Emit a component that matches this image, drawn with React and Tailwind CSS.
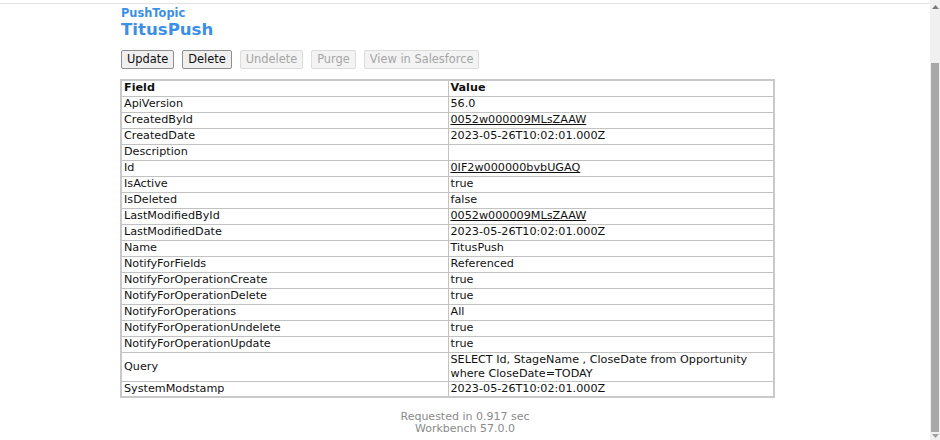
const rows = [
  ['ApiVersion', '56.0'],
  ['CreatedById', '0052w000009MLsZAAW', true],
  ['CreatedDate', '2023-05-26T10:02:01.000Z'],
  ['Description', ''],
  ['Id', '0IF2w000000bvbUGAQ', true],
  ['IsActive', 'true'],
  ['IsDeleted', 'false'],
  ['LastModifiedById', '0052w000009MLsZAAW', true],
  ['LastModifiedDate', '2023-05-26T10:02:01.000Z'],
  ['Name', 'TitusPush'],
  ['NotifyForFields', 'Referenced'],
  ['NotifyForOperationCreate', 'true'],
  ['NotifyForOperationDelete', 'true'],
  ['NotifyForOperations', 'All'],
  ['NotifyForOperationUndelete', 'true'],
  ['NotifyForOperationUpdate', 'true'],
  ['Query', 'SELECT Id, StageName , CloseDate from Opportunity where CloseDate=TODAY'],
  ['SystemModstamp', '2023-05-26T10:02:01.000Z'],
];

const Btn = ({ children, disabled }) => (
  <button
    className={
      disabled
        ? 'h-[19px] px-[5px] bg-[#f3f3f3] border border-[#dcdcdc] rounded-[2px] text-[#a6a6a6] text-[11.4px] leading-none'
        : 'h-[19px] px-[5px] bg-[#efefef] border border-[#8f8f8f] rounded-[2px] text-[#111] text-[11.4px] leading-none'
    }
  >
    {children}
  </button>
);

export default function App() {
  return (
    <div className="w-[940px] h-[440px] overflow-hidden flex bg-white font-['DejaVu_Sans',Verdana,sans-serif] text-[11.2px] text-[#111]">
      <div className="flex-1 flex flex-col pt-[3px]">
        <div className="border-t border-[#e3e3e3] flex-1 flex flex-col pl-[121px]">
          {/* header */}
          <div className="pt-[3px] text-[#3d8fe6] font-bold">
            <div className="text-[11.4px] leading-[13px]">PushTopic</div>
            <div className="text-[16.6px] leading-[20px]">TitusPush</div>
          </div>

          {/* actions */}
          <div className="flex gap-[8px] mt-[10px]">
            <Btn>Update</Btn>
            <Btn>Delete</Btn>
            <Btn disabled>Undelete</Btn>
            <Btn disabled>Purge</Btn>
            <Btn disabled>View in Salesforce</Btn>
          </div>

          {/* detail table */}
          <table className="mt-[10px] ml-[-1px] w-[655px] border-collapse border-2 border-[#c9c9c9]">
            <tbody>
              <tr className="h-[16px] leading-[14px]">
                <th className="w-[327px] border border-[#c2c2c2] px-[2px] text-left font-bold">Field</th>
                <th className="border border-[#c2c2c2] px-[2px] text-left font-bold">Value</th>
              </tr>
              {rows.map(([k, v, link]) => (
                <tr key={k} className="h-[16px] leading-[14px]">
                  <td className="border border-[#c2c2c2] px-[2px] align-middle">{k}</td>
                  <td className="border border-[#c2c2c2] px-[2px] align-middle">
                    {link ? <a className="underline text-[#111]">{v}</a> : v}
                  </td>
                </tr>
              ))}
            </tbody>
          </table>

          {/* footer */}
          <div className="ml-[-121px] mt-[13px] text-center text-[#8a8a8a] text-[11px] leading-[12px]">
            <div>Requested in 0.917 sec</div>
            <div>Workbench 57.0.0</div>
          </div>
        </div>
      </div>

      {/* scrollbar */}
      <div className="w-[10px] bg-[#f0f0f0] flex flex-col items-center">
        <div className="h-[14px] flex items-center justify-center">
          <svg width="7" height="4" viewBox="0 0 7 4"><path d="M3.5 0L7 4H0z" fill="#7a7a7a" /></svg>
        </div>
        <div className="h-[49px]" />
        <div className="w-[8px] flex-1 bg-[#a8a8a8]" />
        <div className="h-[8px] flex items-center justify-center">
          <svg width="7" height="4" viewBox="0 0 7 4"><path d="M0 0H7L3.5 4z" fill="#a0a0a0" /></svg>
        </div>
      </div>
    </div>
  );
}
